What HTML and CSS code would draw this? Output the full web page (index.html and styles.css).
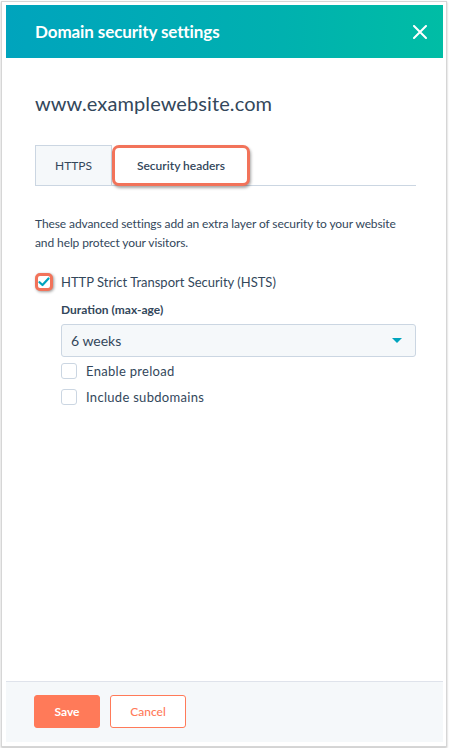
FILE: index.html
```html
<!DOCTYPE html>
<html lang="en">
<head>
    <meta charset="UTF-8">
    <meta name="viewport" content="width=device-width, initial-scale=1.0">
    <title>Domain security settings</title>
    <link rel="stylesheet" href="styles.css">
</head>
<body>
<div class="frame">
    <div class="panel">
        <div class="header">
            <h1>Domain security settings</h1>
            <button class="close" aria-label="Close">
                <svg width="14" height="14" viewBox="0 0 14 14"><path d="M1 1L13 13M13 1L1 13" stroke="#fff" stroke-width="2" stroke-linecap="round"/></svg>
            </button>
        </div>

        <div class="content">
            <h2 class="domain">www.examplewebsite.com</h2>

            <div class="tabs">
                <div class="tab">HTTPS</div>
                <div class="tab active">Security headers</div>
            </div>

            <p class="intro">These advanced settings add an extra layer of security to your website and help protect your visitors.</p>

            <label class="check main">
                <span class="box checked highlight">
                    <svg width="12" height="10" viewBox="0 0 12 10"><path d="M1.5 5.2L4.5 8L10.5 1.5" fill="none" stroke="#00a4bd" stroke-width="2.2" stroke-linecap="round" stroke-linejoin="round"/></svg>
                </span>
                HTTP Strict Transport Security (HSTS)
            </label>

            <div class="options">
                <div class="field-label">Duration (max-age)</div>
                <div class="select">
                    <span>6 weeks</span>
                    <span class="caret"></span>
                </div>
                <label class="check"><span class="box"></span>Enable preload</label>
                <label class="check"><span class="box"></span>Include subdomains</label>
            </div>
        </div>

        <div class="footer">
            <button class="btn primary">Save</button>
            <button class="btn secondary">Cancel</button>
        </div>
    </div>
</div>
</body>
</html>
```

FILE: styles.css
```css
html, body { margin: 0; padding: 0; background: #fff; }
body {
    font-family: Lato, "Noto Sans", sans-serif;
    color: #33475b;
}
.frame {
    margin: 1px; width: 446px; height: 746px; box-sizing: border-box;
    border: 1px solid #d6d6d6; padding: 3px 3px 4px 4px;
    box-shadow: 0 1px 2px rgba(0,0,0,0.25);
}
.panel {
    height: 100%; display: flex; flex-direction: column;
    background: #fff;
}
.header {
    height: 53px; flex-shrink: 0;
    background: linear-gradient(90deg, #00a4bd 0%, #00b0b0 60%, #00bda5 100%);
    display: flex; align-items: center; justify-content: space-between;
    padding: 0 12px 0 29px;
}
.header h1 {
    margin: 0; color: #fff; font-size: 17px; font-weight: 700;
    letter-spacing: -0.1px;
}
.close {
    background: none; border: none; padding: 4px; cursor: pointer;
    display: flex;
}
.content { flex: 1; padding: 0 27px 0 29px; }
.domain {
    margin: 32px 0 0; font-size: 20px; font-weight: 400;
    letter-spacing: 0.1px; line-height: 26px;
}
.tabs {
    margin-top: 29px; display: flex; height: 40px;
    border-bottom: 1px solid #cbd6e2;
}
.tab {
    display: flex; align-items: center; justify-content: center;
    font-size: 12px; box-sizing: border-box;
}
.tab:first-child {
    width: 77px; background: #f5f8fa;
    border: 1px solid #cbd6e2; border-bottom: none;
}
.tab.active {
    width: 138px; background: #fff; font-weight: 600;
    border: 3px solid #f2735a; border-radius: 7px;
    box-shadow: 1px 2px 3px rgba(0,0,0,0.35);
    margin-bottom: -1px;
}
.intro {
    margin: 28px 0 0; font-size: 12px; line-height: 19px;
    letter-spacing: -0.1px;
}
.check {
    display: flex; align-items: center; gap: 9px;
    font-size: 13px; letter-spacing: 0.3px;
}
.check.main { margin-top: 21px; font-size: 13px; gap: 8px; letter-spacing: 0; }
.box {
    width: 16px; height: 16px; box-sizing: border-box;
    border: 1px solid #cbd6e2; border-radius: 3px; background: #fff;
    display: flex; align-items: center; justify-content: center;
    flex-shrink: 0;
}
.box.highlight {
    width: 18px; height: 18px;
    border: 3px solid #f2735a; border-radius: 5px;
    box-shadow: 1px 1px 3px rgba(0,0,0,0.4);
}
.options { padding-left: 26px; }
.field-label {
    margin-top: 11px; font-size: 12px; font-weight: 700;
    letter-spacing: 0;
}
.select {
    margin-top: 7px; height: 33px; box-sizing: border-box;
    background: #f5f8fa; border: 1px solid #cbd6e2; border-radius: 3px;
    display: flex; align-items: center; justify-content: space-between;
    padding: 0 13px 0 9px; font-size: 14px;
}
.caret {
    width: 0; height: 0;
    border-left: 5px solid transparent; border-right: 5px solid transparent;
    border-top: 5px solid #00a4bd;
}
.options .check { height: 16px; margin-top: 6px; }
.options .check + .check { margin-top: 10px; }
.footer {
    flex-shrink: 0; height: 61px; box-sizing: border-box;
    background: #f5f8fa; border-top: 1px solid #dfe3eb;
    display: flex; align-items: center; gap: 10px; padding: 0 0 2px 28px;
}
.btn {
    height: 33px; border-radius: 3px; font-family: inherit;
    font-size: 12px; font-weight: 700; cursor: pointer;
}
.primary {
    width: 66px; background: #ff7a59; color: #fff;
    border: 1px solid #ff7a59;
}
.secondary {
    width: 76px; background: #fff; color: #ff7a59;
    border: 1px solid #ff7a59; font-weight: 500;
}
```
